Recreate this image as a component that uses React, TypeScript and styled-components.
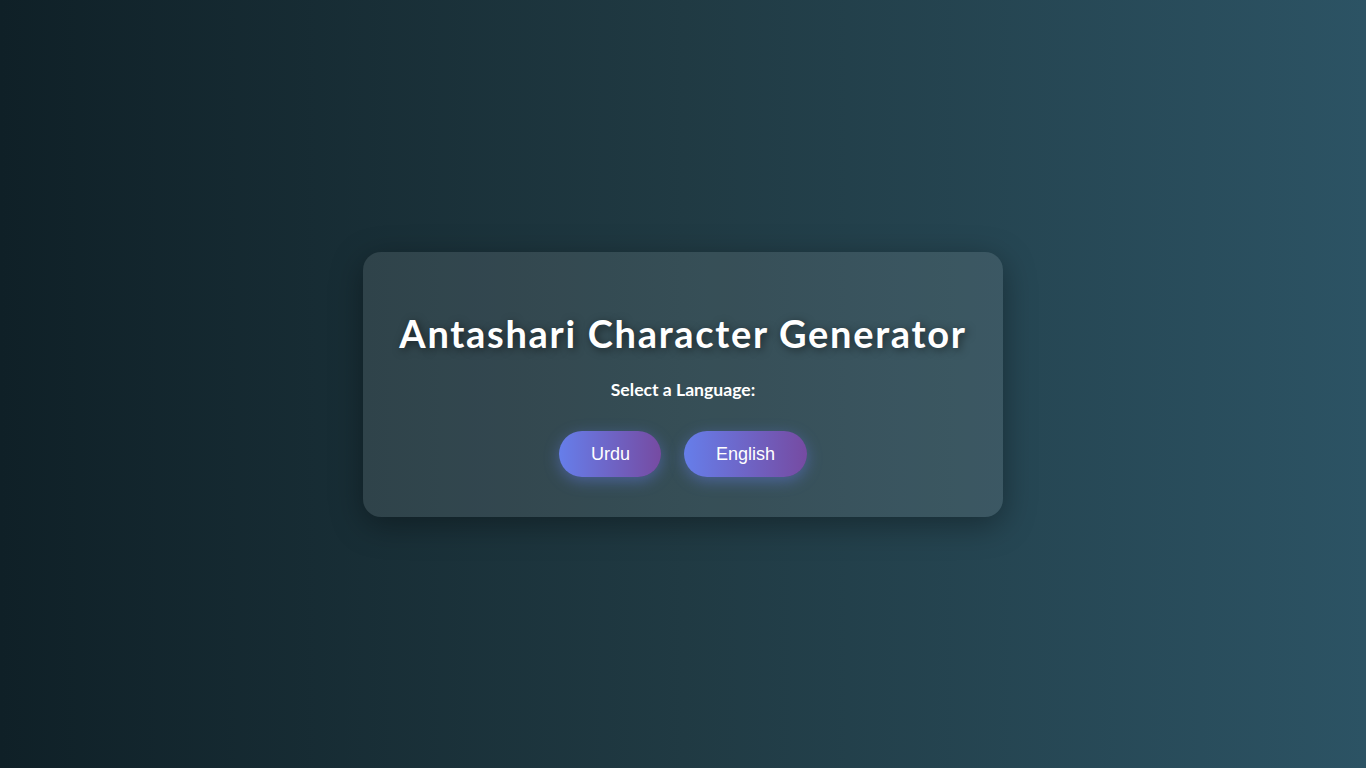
import React from "react";
import styled, { createGlobalStyle } from "styled-components";

const Global = createGlobalStyle`
  html, body { margin: 0; padding: 0; }
  body {
    font-family: "Lato", "Open Sans", sans-serif;
    background: linear-gradient(to right, #0f2027, #203a43, #2c5364);
    min-height: 100vh;
  }
`;

const Page = styled.div`
  min-height: 768px;
  display: flex;
  align-items: center;
  justify-content: center;
  box-sizing: border-box;
`;

const Card = styled.div`
  width: 640px;
  box-sizing: border-box;
  padding: 58px 30px 40px;
  border-radius: 18px;
  background: rgba(255, 255, 255, 0.1);
  box-shadow: 0 8px 32px rgba(0, 0, 0, 0.35);
  display: flex;
  flex-direction: column;
  align-items: center;
  color: #fff;
`;

const Title = styled.h1`
  margin: 0;
  font-family: "Lato", "Open Sans", sans-serif;
  font-weight: 700;
  font-size: 38px;
  line-height: 46px;
  letter-spacing: 1.7px;
  text-shadow: 2px 2px 8px rgba(0, 0, 0, 0.5);
`;

const Label = styled.p`
  margin: 23px 0 0;
  font-family: "Lato", "Open Sans", sans-serif;
  font-weight: 700;
  font-size: 17.6px;
  line-height: 22px;
`;

const Buttons = styled.div`
  display: flex;
  gap: 23px;
  margin-top: 30px;
`;

const LangButton = styled.button`
  font-family: "Liberation Sans", Arial, sans-serif;
  font-size: 18px;
  line-height: 22px;
  color: #fff;
  border: none;
  border-radius: 24px;
  padding: 12px 31.5px;
  background: linear-gradient(to right, #667eea, #764ba2);
  box-shadow: 0 4px 15px rgba(102, 126, 234, 0.45);
  cursor: pointer;
`;

export default function App() {
  return (
    <>
      <Global />
      <Page>
        <Card>
          <Title>Antashari Character Generator</Title>
          <Label>Select a Language:</Label>
          <Buttons>
            <LangButton>Urdu</LangButton>
            <LangButton>English</LangButton>
          </Buttons>
        </Card>
      </Page>
    </>
  );
}
